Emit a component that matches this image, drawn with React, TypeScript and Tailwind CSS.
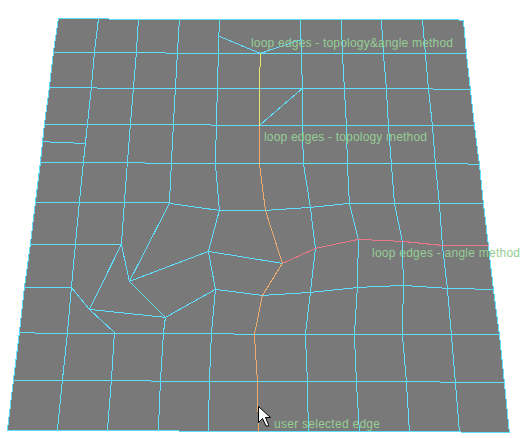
const gridEdges: string[] = [
  // rows
  "58,18 108,18 109,19 458,19 459,20 463,20",
  "53,52 165,52 166,53 466,53",
  "49,87 96,87 97,88 432,88 433,89 470,89",
  "44,124 210,124 211,125 474,125",
  "42,141 49,141 50,142 73,142 74,143 85,143",
  "40,162 144,162 145,163 467,163 468,164 479,164",
  "35,202 168,202 169,203 219,210 265,210 310,207 349,203 483,203",
  "30,244 121,244",
  "129,281 208,251 282,263",
  "24,287 71,287",
  "89,309 165,317 215,289 262,295 310,292 358,287 403,285 447,288 474,288 475,289 493,289",
  "19,332 34,332 35,333 233,333 234,334 499,334",
  "13,380 150,380 151,381 439,381 440,382 504,382",
  "7,430 178,430 179,431 460,431 461,432 509,432",
  // columns
  "58,18 53,52 49,87 44,124 40,162 35,202 30,244 24,287 19,332 13,380 7,430",
  "98,19 94,52 91,87 87,124 85,143 83,162 79,202 75,244 71,287 67,333 62,380 57,430",
  "138,19 136,52 133,88 130,124 127,162 124,202 121,244",
  "114,332 111,380 107,430",
  "179,19 177,53 175,88 173,124 171,163 169,203",
  "165,317 163,333 160,381 158,430",
  "219,19 218,53 217,88 216,125 215,163 219,210 208,251 215,289 211,333 209,381 208,431",
  "300,19 301,53 302,88 302,125 303,163 310,207 315,248 310,292 305,334 307,381 308,431",
  "341,19 342,53 344,88 346,125 347,163 349,203 358,239 357,287 354,334 356,381 359,431",
  "381,19 383,53 386,88 388,125 391,163 394,203 402,241 403,285 402,334 406,381 409,431",
  "422,19 425,53 428,88 432,125 435,163 439,203 442,245 447,288 451,334 455,382 459,431",
  "463,20 466,53 470,89 474,125 479,164 483,203 488,245 493,289 499,334 504,382 509,432",
  // cross edges
  "219,36 260,53 301,39",
  "259,125 302,88",
  "169,203 129,281 165,317",
  "121,244 129,281",
  "121,244 89,309",
  "71,287 89,309 114,332",
];

const surface =
  "58,18 108,18 109,19 458,19 463,20 466,53 470,89 474,125 479,164 483,203 488,245 493,289 499,334 504,382 509,432 461,432 460,431 179,431 178,430 7,430 13,380 19,332 24,287 30,244 35,202 40,162 44,124 49,87 53,52";

const labels = [
  { text: "loop edges - topology&angle method", x: 251, y: 47, width: 202 },
  { text: "loop edges - topology method", x: 264, y: 141, width: 163 },
  { text: "loop edges - angle method", x: 372, y: 257, width: 148 },
  { text: "user selected edge", x: 274, y: 428, width: 106 },
];

function Edge({ points, color }: { points: string; color: string }) {
  return (
    <polyline
      points={points}
      transform="translate(0.4 0.4)"
      fill="none"
      stroke={color}
      strokeWidth="1"
      strokeLinecap="square"
      shapeRendering="crispEdges"
    />
  );
}

export default function App() {
  return (
    <main className="h-[438px] w-[525px] overflow-hidden bg-white">
      <svg className="block h-[438px] w-[525px]" viewBox="0 0 525 438">
        <polygon
          points={surface}
          transform="translate(0.4 0.4)"
          fill="#797979"
          shapeRendering="crispEdges"
        />
        {gridEdges.map((points) => (
          <Edge key={points} points={points} color="#5fdfff" />
        ))}
        <Edge points="282,263 315,248 358,239 402,241 442,245 488,245" color="#eb7888" />
        <Edge
          points="259,125 259,163 265,210 282,263 262,295 254,334 257,381 258,431"
          color="#ebaa70"
        />
        <Edge points="260,53 260,66 259,67 259,125" color="#e8e870" />
        <g className="font-['Liberation_Sans',Arial,sans-serif] text-[12px]" fill="#96cd96">
          {labels.map((label) => (
            <text key={label.text} x={label.x} y={label.y} textLength={label.width}>
              {label.text}
            </text>
          ))}
        </g>
        <path
          d="M258.5 406.5V422.5L262.5 418.5L266 426H268.5V424.5L265.5 417.5H270.5Z"
          fill="white"
          stroke="black"
        />
      </svg>
    </main>
  );
}
